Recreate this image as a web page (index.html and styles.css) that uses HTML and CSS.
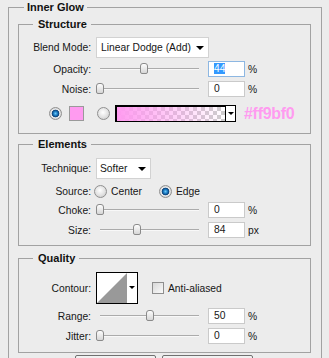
FILE: index.html
```html
<!DOCTYPE html>
<html>
  <head>
    <title>Inner Glow</title>
    <link rel="stylesheet" href="styles.css">
  </head>
  <body>
    <fieldset class="panel">
      <legend>Inner Glow</legend>

      <fieldset class="group structure">
        <legend>Structure</legend>
        <div class="row row-select">
          <label class="lbl">Blend Mode:</label>
          <div class="select select-blend">Linear Dodge (Add)<span class="caret"></span></div>
        </div>
        <div class="row row-opacity">
          <label class="lbl">Opacity:</label>
          <div class="slider"><span class="thumb" style="left: 44%"></span></div>
          <div class="num focus"><span class="sel">44</span></div>
          <span class="unit">%</span>
        </div>
        <div class="row row-noise">
          <label class="lbl">Noise:</label>
          <div class="slider"><span class="thumb" style="left: 0%"></span></div>
          <div class="num">0</div>
          <span class="unit">%</span>
        </div>
        <div class="row row-color">
          <span class="radio on radio-solid"></span>
          <span class="swatch"></span>
          <span class="radio radio-grad"></span>
          <span class="grad"></span>
          <span class="grad-drop"><span class="caret small"></span></span>
          <span class="hex">#ff9bf0</span>
        </div>
      </fieldset>

      <fieldset class="group elements">
        <legend>Elements</legend>
        <div class="row row-select">
          <label class="lbl">Technique:</label>
          <div class="select select-tech">Softer<span class="caret"></span></div>
        </div>
        <div class="row row-source">
          <label class="lbl">Source:</label>
          <span class="radio radio-center"></span>
          <span class="opt">Center</span>
          <span class="radio on radio-edge"></span>
          <span class="opt">Edge</span>
        </div>
        <div class="row row-choke">
          <label class="lbl">Choke:</label>
          <div class="slider"><span class="thumb" style="left: 0%"></span></div>
          <div class="num">0</div>
          <span class="unit">%</span>
        </div>
        <div class="row row-size">
          <label class="lbl">Size:</label>
          <div class="slider"><span class="thumb" style="left: 37%"></span></div>
          <div class="num">84</div>
          <span class="unit">px</span>
        </div>
      </fieldset>

      <fieldset class="group quality">
        <legend>Quality</legend>
        <div class="row row-contour">
          <label class="lbl">Contour:</label>
          <svg class="contour" width="42" height="32" viewBox="0 0 42 32">
            <rect x="0.5" y="0.5" width="41" height="31" fill="#fff" stroke="#000"/>
            <polygon points="1,31 31,1 31,31" fill="#999"/>
            <polygon points="33,14 39,14 36,17" fill="#000"/>
          </svg>
          <span class="check"></span>
          <span class="opt">Anti-aliased</span>
        </div>
        <div class="row row-range">
          <label class="lbl">Range:</label>
          <div class="slider"><span class="thumb" style="left: 50%"></span></div>
          <div class="num">50</div>
          <span class="unit">%</span>
        </div>
        <div class="row row-jitter">
          <label class="lbl">Jitter:</label>
          <div class="slider"><span class="thumb" style="left: 0%"></span></div>
          <div class="num">0</div>
          <span class="unit">%</span>
        </div>
      </fieldset>

      <div class="buttons">
        <button class="btn btn-default" aria-label="Make Default"></button>
        <button class="btn btn-reset" aria-label="Reset to Default"></button>
      </div>
    </fieldset>
  </body>
</html>
```

FILE: styles.css
```css
body{
  margin: 0;
  background-color: #ECECEC;
  font-family: "Liberation Sans", Arial, sans-serif;
  font-size: 10.3px;
  color: #161616;
  overflow: hidden;
}
fieldset{
  margin: 0;
  min-width: 0;
  border: 1px solid #A2A2A2;
}
legend{
  font-size: 11px;
  font-weight: bold;
  line-height: 14px;
  color: #111;
}
.panel{
  width: 314px;
  margin-left: 8px;
  padding: 3px 10px 0 9px;
  box-sizing: border-box;
}
.panel > legend{
  margin-left: 6px;
  padding: 0 3px 0 3px;
}
.group{
  padding: 0 0 11px 0;
}
.group > legend{
  margin-left: 14px;
  padding: 0 4px 0 5px;
}
.elements{
  margin-top: 3px;
  padding-bottom: 7px;
}
.quality{
  margin-top: 5px;
  padding-bottom: 8px;
}

/* rows */
.row{
  display: flex;
  align-items: center;
  height: 16px;
}
.lbl{
  width: 72px;
  flex: none;
  text-align: right;
}
.structure .row-select{ margin-top: 6px; height: 21px; }
.row-opacity{ margin-top: 3px; }
.row-noise{ margin-top: 4px; }
.row-color{ margin-top: 8px; height: 17px; }
.elements .row-select{ margin-top: 7px; height: 21px; }
.row-source{ margin-top: 4px; }
.row-choke{ margin-top: 3px; }
.row-size{ margin-top: 4px; }
.row-contour{ margin-top: 7px; height: 32px; }
.row-range{ margin-top: 4px; }
.row-jitter{ margin-top: 4px; }

/* select boxes */
.select{
  margin-left: 5px;
  height: 21px;
  box-sizing: border-box;
  display: flex;
  align-items: center;
  background: #fff;
  border: 1px solid #D2D2D2;
  white-space: nowrap;
}
.select-blend{
  width: 113px;
  padding-left: 4px;
}
.select-tech{
  width: 55px;
  padding-left: 3px;
}
.caret{
  width: 0;
  height: 0;
  margin-left: auto;
  margin-right: 4px;
  border-left: 4px solid transparent;
  border-right: 4px solid transparent;
  border-top: 4px solid #000;
}
.caret.small{
  margin: 0;
  border-left-width: 3px;
  border-right-width: 3px;
  border-top-width: 3px;
}

/* sliders */
.slider{
  position: relative;
  flex: none;
  width: 99px;
  height: 16px;
  margin-left: 9px;
}
.slider::before{
  content: "";
  position: absolute;
  left: 0;
  right: 0;
  top: 7px;
  border-top: 1px solid #ABABAB;
  border-bottom: 1px solid #F8F8F8;
}
.thumb{
  position: absolute;
  top: 2px;
  width: 6px;
  height: 9px;
  margin-left: -4px;
  border: 1px solid #8A8A8A;
  border-radius: 3px 3px 2px 2px;
  background: linear-gradient(#FDFDFD, #D6D6D6);
}

/* number fields */
.num{
  flex: none;
  width: 37px;
  height: 16px;
  margin-left: 9px;
  padding-left: 5px;
  box-sizing: border-box;
  line-height: 14px;
  background: #fff;
  border: 1px solid #CACACA;
}
.num.focus{
  border-color: #8DB7E2;
}
.sel{
  background: #3399FF;
  color: #fff;
}
.unit{
  margin-left: 3px;
}

/* radios, swatch, gradient */
.radio{
  flex: none;
  width: 13px;
  height: 13px;
  box-sizing: border-box;
  border-radius: 50%;
  border: 1px solid #909090;
  background: radial-gradient(circle at 45% 40%, #FFFFFF 0, #E4E4E4 50%, #C4C4C4 100%);
}
.radio.on{
  background: radial-gradient(circle at 50% 50%, #6CC8F7 0, #1C7BC2 2px, #0B3F75 3.5px, #F0F0F0 4.2px, #C8C8C8 6px);
}
.radio-solid{ margin-left: 30px; }
.swatch{
  flex: none;
  width: 15px;
  height: 15px;
  margin-left: 7px;
  box-sizing: border-box;
  border: 1px solid #9A9A9A;
  background: #FF9BF0;
}
.radio-grad{ margin-left: 13px; }
.grad{
  flex: none;
  width: 111px;
  height: 17px;
  margin-left: 5px;
  box-sizing: border-box;
  border: 1px solid #000;
  border-top-width: 2px;
  border-left-width: 2px;
  background:
    linear-gradient(90deg, #FF9BF0 0, rgba(255,155,240,0.55) 45%, rgba(255,155,240,0) 100%),
    conic-gradient(#CDCDCD 25%, #fff 0 50%, #CDCDCD 0 75%, #fff 0) 0 0 / 8px 8px;
}
.grad-drop{
  flex: none;
  width: 11px;
  height: 17px;
  margin-left: -1px;
  box-sizing: border-box;
  display: flex;
  align-items: center;
  justify-content: center;
  background: #fff;
  border: 1px solid #000;
}
.hex{
  margin-left: 8px;
  font-size: 16px;
  font-weight: bold;
  letter-spacing: -0.3px;
  color: #FF9BF0;
}

/* source options */
.radio-center{ margin-left: 3px; }
.radio-center + .opt{ margin-left: 4px; }
.radio-edge{ margin-left: 17px; }
.radio-edge + .opt{ margin-left: 4px; }

/* contour */
.contour{
  flex: none;
  margin-left: 5px;
  display: block;
}
.check{
  flex: none;
  width: 12px;
  height: 12px;
  margin-left: 14px;
  box-sizing: border-box;
  border: 1px solid #8E8E8E;
  background: linear-gradient(135deg, #D8D8D8, #FAFAFA);
}
.check + .opt{
  margin-left: 4px;
}

/* bottom buttons */
.buttons{
  display: flex;
  gap: 6px;
  margin-top: 2px;
  padding-left: 57px;
}
.btn{
  height: 22px;
  padding: 0;
  font: inherit;
  border: 1px solid #707070;
  border-radius: 2px;
  background: linear-gradient(#F2F2F2, #DCDCDC);
}
.btn-default{ width: 81px; }
.btn-reset{ width: 91px; }
```
